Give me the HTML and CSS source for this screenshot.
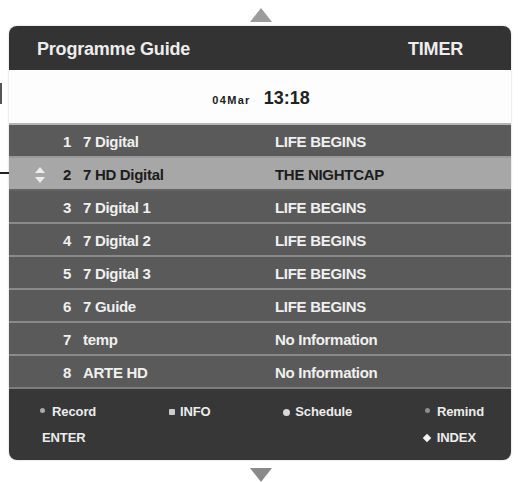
FILE: index.html
```html
<!DOCTYPE html>
<html>
<head>
<meta charset="utf-8">
<link rel="stylesheet" href="styles.css">
</head>
<body>
<span class="mark-v"></span>
<span class="mark-h"></span>
<div class="page">
  <div class="arrow">
    <svg width="22" height="14" viewBox="0 0 22 14"><polygon points="11,0 22,14 0,14" fill="#9c9c9c"/></svg>
  </div>
  <div class="panel">
    <div class="header">
      <span>Programme Guide</span>
      <span>TIMER</span>
    </div>
    <div class="datebar">
      <span class="date">04Mar</span>
      <span class="time">13:18</span>
    </div>
    <div class="list">
      <div class="row"><span class="sel"></span><span class="num">1</span><span class="name">7 Digital</span><span class="prog">LIFE BEGINS</span></div>
      <div class="row active"><span class="sel"><svg width="10" height="16" viewBox="0 0 10 16"><polygon points="5,0 10,6 0,6" fill="#ececec"/><polygon points="0,10 10,10 5,16" fill="#ececec"/></svg></span><span class="num">2</span><span class="name">7 HD Digital</span><span class="prog">THE NIGHTCAP</span></div>
      <div class="row"><span class="sel"></span><span class="num">3</span><span class="name">7 Digital 1</span><span class="prog">LIFE BEGINS</span></div>
      <div class="row"><span class="sel"></span><span class="num">4</span><span class="name">7 Digital 2</span><span class="prog">LIFE BEGINS</span></div>
      <div class="row"><span class="sel"></span><span class="num">5</span><span class="name">7 Digital 3</span><span class="prog">LIFE BEGINS</span></div>
      <div class="row"><span class="sel"></span><span class="num">6</span><span class="name">7 Guide</span><span class="prog">LIFE BEGINS</span></div>
      <div class="row"><span class="sel"></span><span class="num">7</span><span class="name">temp</span><span class="prog">No Information</span></div>
      <div class="row"><span class="sel"></span><span class="num">8</span><span class="name">ARTE HD</span><span class="prog">No Information</span></div>
    </div>
    <div class="footer">
      <div class="keys">
        <span class="key"><i class="dot dot-rec"></i>Record</span>
        <span class="key"><i class="dot dot-info"></i>INFO</span>
        <span class="key"><i class="dot dot-sched"></i>Schedule</span>
        <span class="key"><i class="dot dot-rem"></i>Remind</span>
      </div>
      <div class="keys keys2">
        <span class="key">ENTER</span>
        <span class="key"><i class="dot dot-idx"></i>INDEX</span>
      </div>
    </div>
  </div>
  <div class="arrow arrow-down">
    <svg width="22" height="14" viewBox="0 0 22 14"><polygon points="0,0 22,0 11,14" fill="#8a8a8a"/></svg>
  </div>
</div>
</body>
</html>
```
FILE: styles.css
```css
html, body {
  margin: 0;
  padding: 0;
  background: #ffffff;
}
body {
  width: 518px;
  height: 482px;
  overflow: hidden;
  position: relative;
  font-family: "Liberation Sans", Arial, sans-serif;
  font-weight: bold;
}
.mark-v {
  position: absolute;
  left: 0;
  top: 83px;
  width: 2px;
  height: 21px;
  background: #555;
}
.mark-h {
  position: absolute;
  left: 0;
  top: 172px;
  width: 9px;
  height: 2px;
  background: #222;
}
.page {
  padding: 8px 0 0 9px;
  width: 502px;
  display: flex;
  flex-direction: column;
}
.arrow {
  display: flex;
  justify-content: center;
  padding-left: 2px;
  height: 14px;
}
.arrow-down {
  margin-top: 8px;
}
.arrow svg { display: block; }
.panel {
  margin-top: 4px;
  width: 502px;
  border-radius: 8px;
  box-shadow: 0 0 2px rgba(0,0,0,0.25);
}
.header {
  box-sizing: border-box;
  height: 44px;
  background: #333333;
  border-radius: 8px 8px 0 0;
  display: flex;
  justify-content: space-between;
  align-items: center;
  padding: 3px 48px 0 28px;
  color: #ededed;
  font-size: 18px;
  letter-spacing: -0.2px;
}
.datebar {
  box-sizing: border-box;
  height: 53px;
  background: #fdfdfd;
  display: flex;
  justify-content: center;
  align-items: center;
  gap: 13px;
  color: #222;
  padding: 3px 0 0 2px;
}
.date {
  font-size: 11px;
  letter-spacing: 1.3px;
  padding-top: 3px;
}
.time {
  font-size: 18px;
}
.row {
  box-sizing: border-box;
  height: 33px;
  border-top: 2px solid #8a8a8a;
  padding-top: 3px;
  background: #5a5a5a;
  display: grid;
  grid-template-columns: 54px 20px 192px 1fr;
  align-items: center;
  color: #f0f0f0;
  font-size: 15px;
  letter-spacing: -0.3px;
  line-height: 28px;
}
.row:first-child {
  border-top-color: #b5b5b5;
}
.row.active {
  background: #a7a7a7;
  border-top-color: #9a9a9a;
  color: #1c1c1c;
}
.row.active + .row {
  border-top-color: #636363;
}
.sel {
  display: flex;
  align-items: center;
  padding-left: 26px;
  height: 28px;
}
.sel svg { display: block; }
.footer {
  box-sizing: border-box;
  height: 73px;
  background: #373737;
  border-top: 2px solid #7e7e7e;
  border-radius: 0 0 8px 8px;
  padding: 10px 27px 0 31px;
  color: #ececec;
  font-size: 13px;
  letter-spacing: -0.1px;
}
.keys {
  display: flex;
  justify-content: space-between;
  line-height: 26px;
  height: 26px;
}
.keys2 {
  padding-left: 2px;
  padding-right: 8px;
}
.key {
  display: flex;
  align-items: center;
  gap: 5px;
}
.dot {
  display: block;
  background: #cfcfcf;
}
.dot-rec {
  width: 5px;
  height: 5px;
  border-radius: 50%;
  background: #a9a9a9;
  margin-top: -4px;
  margin-right: 2px;
}
.dot-info {
  width: 6px;
  height: 6px;
  border-radius: 1px;
  background: #cccccc;
}
.dot-sched {
  width: 7px;
  height: 7px;
  border-radius: 50%;
  background: #d8d8d8;
}
.dot-rem {
  width: 5px;
  height: 5px;
  border-radius: 50%;
  background: #8e8e8e;
  margin-top: -4px;
  margin-right: 2px;
}
.dot-idx {
  width: 6px;
  height: 6px;
  background: #f4f4f4;
  transform: rotate(45deg);
  margin-right: 2px;
}
```
